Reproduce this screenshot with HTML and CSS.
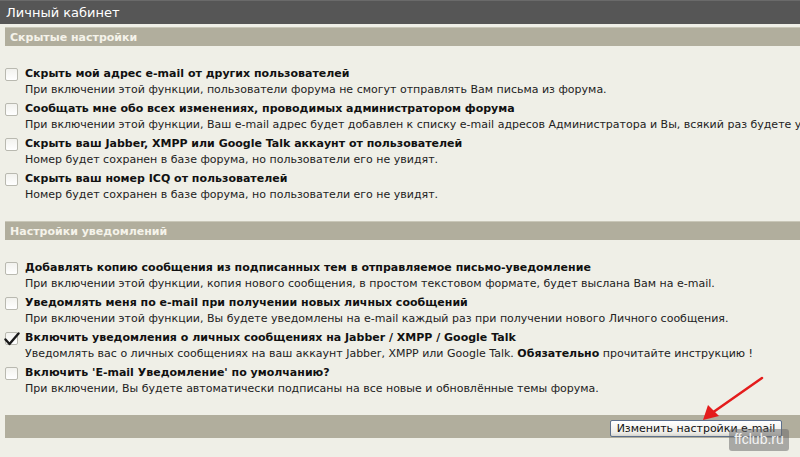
FILE: index.html
```html
<!DOCTYPE html>
<html lang="ru">
<head>
<meta charset="utf-8">
<link rel="stylesheet" href="styles.css">
</head>
<body>
<div class="page">
  <div class="maintitle">Личный кабинет</div>
  <div class="cat">Скрытые настройки</div>
  <div class="items">
    <div class="item">
      <span class="cb"></span>
      <div class="txt"><div class="t">Скрыть мой адрес e-mail от других пользователей</div><div class="d">При включении этой функции, пользователи форума не смогут отправлять Вам письма из форума.</div></div>
    </div>
    <div class="item">
      <span class="cb"></span>
      <div class="txt"><div class="t">Сообщать мне обо всех изменениях, проводимых администратором форума</div><div class="d">При включении этой функции, Ваш e-mail адрес будет добавлен к списку e-mail адресов Администратора и Вы, всякий раз будете уведомлены</div></div>
    </div>
    <div class="item">
      <span class="cb"></span>
      <div class="txt"><div class="t">Скрыть ваш Jabber, XMPP или Google Talk аккаунт от пользователей</div><div class="d">Номер будет сохранен в базе форума, но пользователи его не увидят.</div></div>
    </div>
    <div class="item">
      <span class="cb"></span>
      <div class="txt"><div class="t">Скрыть ваш номер ICQ от пользователей</div><div class="d">Номер будет сохранен в базе форума, но пользователи его не увидят.</div></div>
    </div>
  </div>
  <div class="cat">Настройки уведомлений</div>
  <div class="items">
    <div class="item">
      <span class="cb"></span>
      <div class="txt"><div class="t">Добавлять копию сообщения из подписанных тем в отправляемое письмо-уведомление</div><div class="d">При включении этой функции, копия нового сообщения, в простом текстовом формате, будет выслана Вам на e-mail.</div></div>
    </div>
    <div class="item">
      <span class="cb"></span>
      <div class="txt"><div class="t">Уведомлять меня по e-mail при получении новых личных сообщений</div><div class="d">При включении этой функции, Вы будете уведомлены на e-mail каждый раз при получении нового Личного сообщения.</div></div>
    </div>
    <div class="item">
      <span class="cb checked"><svg class="tick" viewBox="0 0 16 16" width="16" height="16"><path d="M1.5 8.5 L5.5 13 L14.5 2.5" fill="none" stroke="#1a1a1a" stroke-width="2.4" stroke-linecap="round" stroke-linejoin="round"/></svg></span>
      <div class="txt"><div class="t">Включить уведомления о личных сообщениях на Jabber / XMPP / Google Talk</div><div class="d">Уведомлять вас о личных сообщениях на ваш аккаунт Jabber, XMPP или Google Talk. <b>Обязательно</b> прочитайте инструкцию !</div></div>
    </div>
    <div class="item">
      <span class="cb"></span>
      <div class="txt"><div class="t">Включить 'E-mail Уведомление' по умолчанию?</div><div class="d">При включении, Вы будете автоматически подписаны на все новые и обновлённые темы форума.</div></div>
    </div>
  </div>
  <div class="bottombar"><button class="btn">Изменить настройки e-mail</button></div>
</div>
<svg class="arrow" width="800" height="457" viewBox="0 0 800 457">
  <path d="M762 378 L712 413" stroke="#e41c1c" stroke-width="2.5" stroke-linecap="round" fill="none"/>
  <path d="M703 420 L708 405 L719 416 Z" fill="#e41c1c"/>
</svg>
<div class="wm">ffclub.ru</div>
</body>
</html>
```
FILE: styles.css
```css
html, body {
  margin: 0;
  padding: 0;
  width: 800px;
  height: 457px;
  overflow: hidden;
  background: #efefe7;
  font-family: "DejaVu Sans", Verdana, sans-serif;
  font-size: 11px;
  color: #1e1e1e;
}
.page {
  position: relative;
  width: 800px;
  white-space: nowrap;
}
.maintitle {
  height: 23px;
  line-height: 24px;
  background: #565656;
  border-top: 1px solid #6a6a6a;
  color: #ffffff;
  font-size: 13px;
  padding-left: 6px;
  margin-bottom: 3px;
}
.cat {
  margin-left: 5px;
  height: 18px;
  line-height: 19px;
  background: #b1ae9d;
  border-top: 1px solid #c9c7b8;
  color: #f5f3ea;
  font-weight: bold;
  padding-left: 5px;
}
.items {
  padding: 20px 0 18px 5px;
}
.item {
  display: flex;
  align-items: flex-start;
  height: 35px;
}
.item:last-child {
  height: 32px;
}
.cb {
  position: relative;
  flex: none;
  width: 11px;
  height: 11px;
  margin-top: 2px;
  margin-right: 7px;
  border: 1px solid #b9b9b0;
  border-radius: 2px;
  background: linear-gradient(#f2f2ee, #ffffff);
}
.tick {
  position: absolute;
  left: -2px;
  top: -2px;
}
.txt .t {
  font-weight: bold;
  line-height: 16px;
  color: #111;
}
.txt .d {
  line-height: 16px;
  color: #222;
}
.txt .d b {
  color: #111;
}
.bottombar {
  margin-left: 5px;
  height: 23px;
  background: #b1ae9d;
  display: flex;
  align-items: center;
  justify-content: flex-end;
  padding-right: 18px;
}
.btn {
  width: 172px;
  height: 17px;
  padding: 0;
  margin-top: 3px;
  font-family: "DejaVu Sans", Verdana, sans-serif;
  font-size: 11px;
  color: #111;
  background: linear-gradient(#ffffff, #ecebe6 80%, #d6d4cc);
  border: 1px solid #5c6f8c;
  border-radius: 2px;
}
.arrow {
  position: absolute;
  left: 0;
  top: 0;
  pointer-events: none;
}
.wm {
  position: absolute;
  left: 729px;
  top: 429px;
  width: 60px;
  height: 22px;
  line-height: 21px;
  text-align: center;
  border-radius: 3px;
  background: rgba(110, 110, 110, 0.55);
  color: #f4f4f4;
  font-family: "Liberation Sans", Arial, sans-serif;
  font-size: 14px;
}
```
